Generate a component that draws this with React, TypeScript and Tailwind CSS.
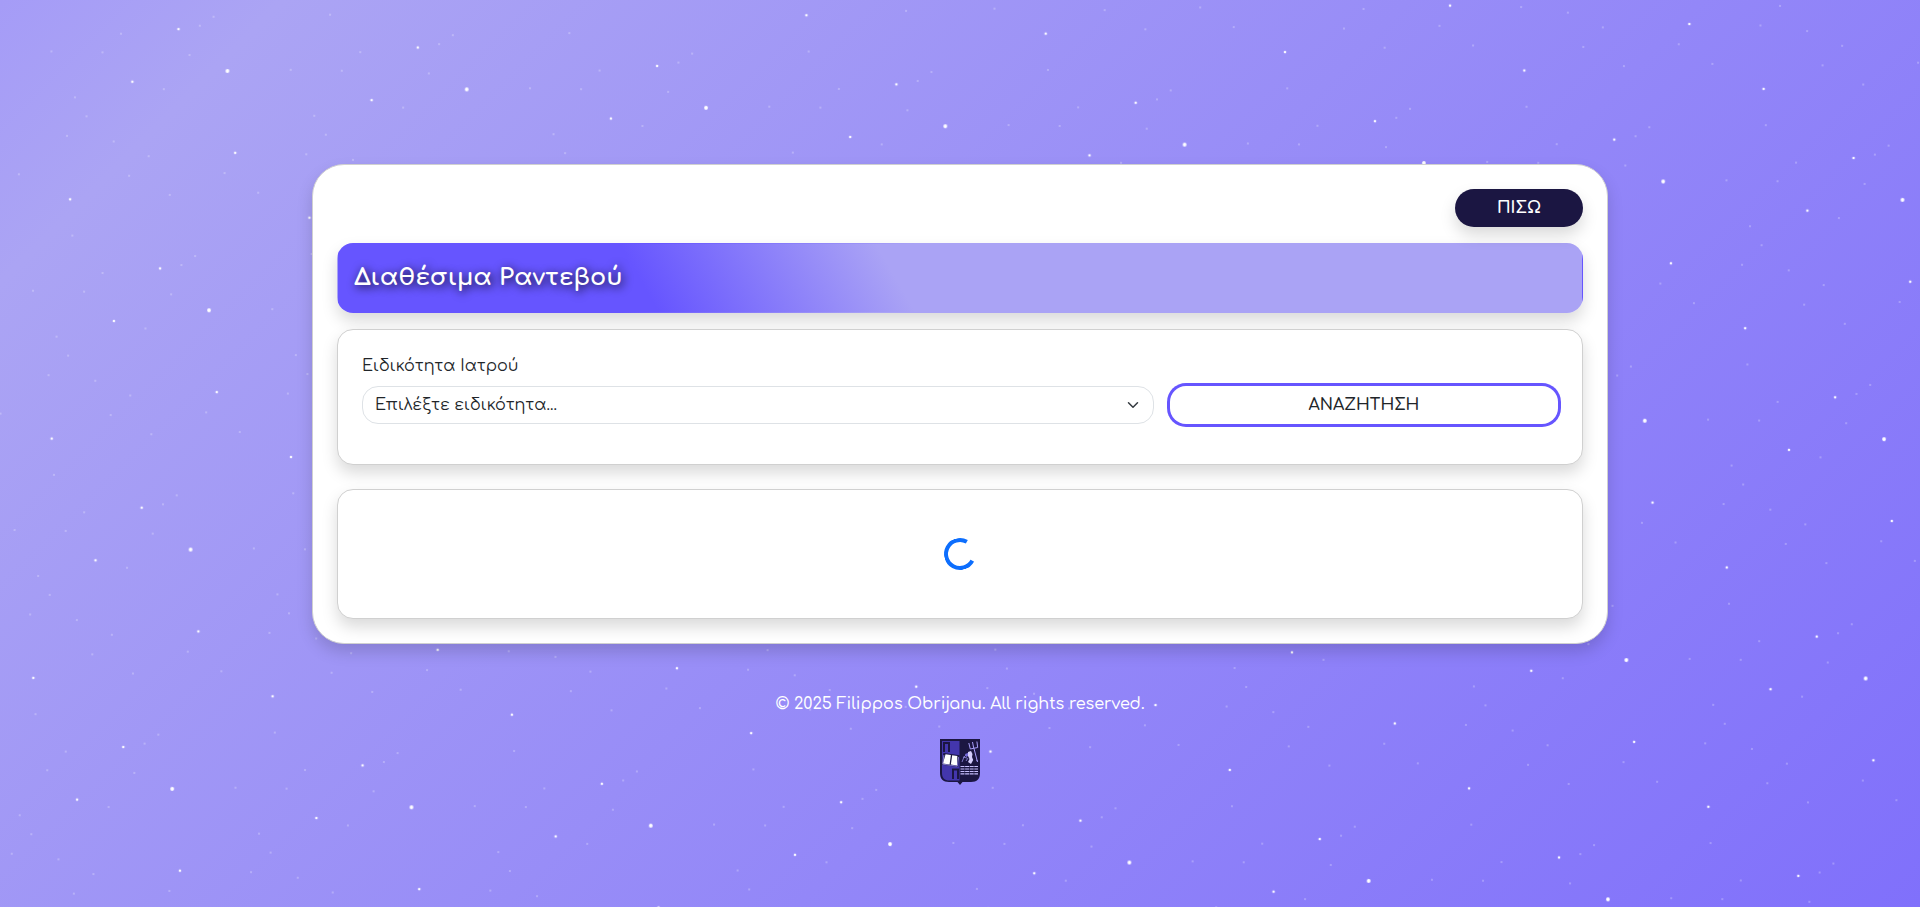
type Star = [x: number, y: number, radius: number, opacity: number];

const TILE = 240;

const stars: Star[] = [
  [220, 60, 1.9, 1],
  [168, 22, 1.3, 0.95],
  [126, 78, 1.3, 0.95],
  [234, 141, 1.3, 0.95],
  [73, 200, 1.3, 0.95],
  [202, 7, 0.8, 0.55],
  [189, 17, 0.8, 0.55],
  [111, 31, 0.8, 0.55],
  [43, 54, 0.8, 0.55],
  [94, 51, 0.8, 0.55],
  [181, 47, 0.8, 0.55],
  [158, 83, 0.8, 0.55],
  [70, 98, 0.8, 0.55],
  [83, 116, 0.8, 0.55],
  [65, 137, 0.8, 0.55],
  [112, 139, 0.8, 0.55],
  [148, 151, 0.8, 0.55],
  [225, 162, 0.8, 0.55],
  [130, 172, 0.8, 0.55],
  [172, 188, 0.8, 0.55],
  [20, 179, 0.8, 0.55],
  [78, 236, 0.8, 0.55],
];

function StarField() {
  return (
    <svg className="pointer-events-none absolute inset-0 -z-10 h-full w-full" aria-hidden="true">
      <defs>
        <pattern
          id="stars"
          width={TILE}
          height={TILE}
          patternUnits="userSpaceOnUse"
          patternTransform="translate(12.7 -5.7) rotate(4.4)"
        >
          {stars.map(([x, y, r, opacity]) => (
            <circle key={`${x}-${y}`} cx={x} cy={y} r={r} fill="#fff" fillOpacity={opacity} />
          ))}
        </pattern>
      </defs>
      <rect width="100%" height="100%" fill="url(#stars)" />
    </svg>
  );
}

function Crest() {
  return (
    <svg className="h-[47px] w-10" viewBox="0 0 40 47" role="img" aria-label="Crest">
      <path d="M0 1h40v34c0 6-3 9-9 9h-8.500L20 47l-2.500-3H9c-6 0-9-3-9-9z" fill="#1b1642" />
      <path d="M2 3h17.500v39.500H9.500C4.500 42.500 2 40 2 35z" fill="#4336ad" />
      <path d="M4 14V5h5v9M13 41v-9.500h5v9.500" fill="none" stroke="#1b1642" strokeWidth="2" />
      <g transform="rotate(8 10.500 22)">
        <path d="M2.500 16h16.500v12h-16.500z" fill="#1b1642" />
        <path d="M4.800 17h5.400v9.500H3.500zM11.500 17h5.200l1 9.500h-6.200z" fill="#fff" />
        <path d="M3.300 18v9.200h14.800V18" fill="none" stroke="#a79efa" strokeWidth=".7" />
      </g>
      <g fill="none" stroke="#a79efa" strokeWidth="1">
        <path d="M28.800 5l1.500 6 7.400-1.500-.8-6M32.500 4l1.300 6.500M34 10.500l3.500 13.500" />
        <path d="M22 24l2-5 3-3 4-1M23 19l4 1M26 23l2-3M36 22l2 1" strokeOpacity=".7" />
      </g>
      <path d="M28 14l3-1 1.500 3-.5 3 1.200 3-2.200 4-3-2 1.500-3-1.500-3z" fill="#d5cefd" />
      <path d="M25 16l3-1v3l-2 1z" fill="#7468d8" />
      <path
        d="M20.500 28.500h17.500M20.500 31h17.500M20.500 33.500h17.500M20.500 35.800h17.500"
        fill="none"
        stroke="#c5bdfb"
        strokeWidth="1.200"
        strokeDasharray="4 .6"
      />
    </svg>
  );
}

export default function App() {
  return (
    <div className="relative isolate flex min-h-screen flex-col items-center justify-center bg-[linear-gradient(135deg,#a59cf7_0%,#aba4f4_10%,#8070fb_100%)] px-3 pt-[42px] font-['Comfortaa','Inter',sans-serif] text-base text-[#212529]">
      <StarField />

      <main className="w-full max-w-[1296px] rounded-[32px] border border-[#d0d0d0] bg-white p-6 shadow-[0_8px_16px_rgba(0,0,0,0.15)]">
        <div className="flex justify-end">
          <button
            type="button"
            className="h-[38px] w-32 rounded-[20px] bg-[#1b1642] font-bold text-white shadow-[0_8px_16px_rgba(0,0,0,0.15)]"
          >
            ΠΙΣΩ
          </button>
        </div>

        <header className="mt-4 rounded-2xl border border-transparent bg-[linear-gradient(60deg,#6655ff_25%,#aaa3f5_45%)] px-4 py-5 shadow-[0_8px_16px_rgba(0,0,0,0.15)]">
          <h1 className="text-2xl leading-7 font-bold text-white [text-shadow:2px_2px_10px_rgba(0,0,0,0.95)]">
            Διαθέσιμα Ραντεβού
          </h1>
        </header>

        <form className="mt-4 rounded-2xl border border-[#d0d0d0] bg-white px-6 pt-6 pb-10 shadow-[0_8px_16px_rgba(0,0,0,0.15)]">
          <div className="grid grid-cols-3 items-end gap-4">
            <div className="col-span-2">
              <label htmlFor="specialty" className="mb-2 block leading-6 font-normal">
                Ειδικότητα Ιατρού
              </label>
              <div className="relative">
                <select
                  id="specialty"
                  className="block h-[38px] w-full appearance-none rounded-2xl border border-[#dee2e6] bg-white px-3 font-normal"
                >
                  <option>Επιλέξτε ειδικότητα...</option>
                </select>
                <svg
                  className="pointer-events-none absolute top-[13px] right-[15px] size-3"
                  viewBox="0 0 16 16"
                  fill="none"
                  aria-hidden="true"
                >
                  <path d="m2 5 6 6 6-6" stroke="#343a40" strokeWidth="2" strokeLinecap="round" strokeLinejoin="round" />
                </svg>
              </div>
            </div>
            <button type="button" className="h-[38px] rounded-2xl bg-white font-semibold ring-[3px] ring-[#6655ff]">
              ΑΝΑΖΗΤΗΣΗ
            </button>
          </div>
        </form>

        <section className="mt-6 flex justify-center rounded-2xl border border-[#d0d0d0] bg-white py-12 shadow-[0_8px_16px_rgba(0,0,0,0.15)]">
          <div
            role="status"
            aria-label="Φόρτωση"
            className="size-8 -rotate-[16deg] rounded-full border-4 border-[#0d6efd] border-r-transparent"
          />
        </section>
      </main>

      <footer className="mt-12 flex flex-col items-center gap-[22px] text-white">
        <p className="leading-6 font-medium">© 2025 Filippos Obrijanu. All rights reserved.</p>
        <Crest />
      </footer>
    </div>
  );
}
